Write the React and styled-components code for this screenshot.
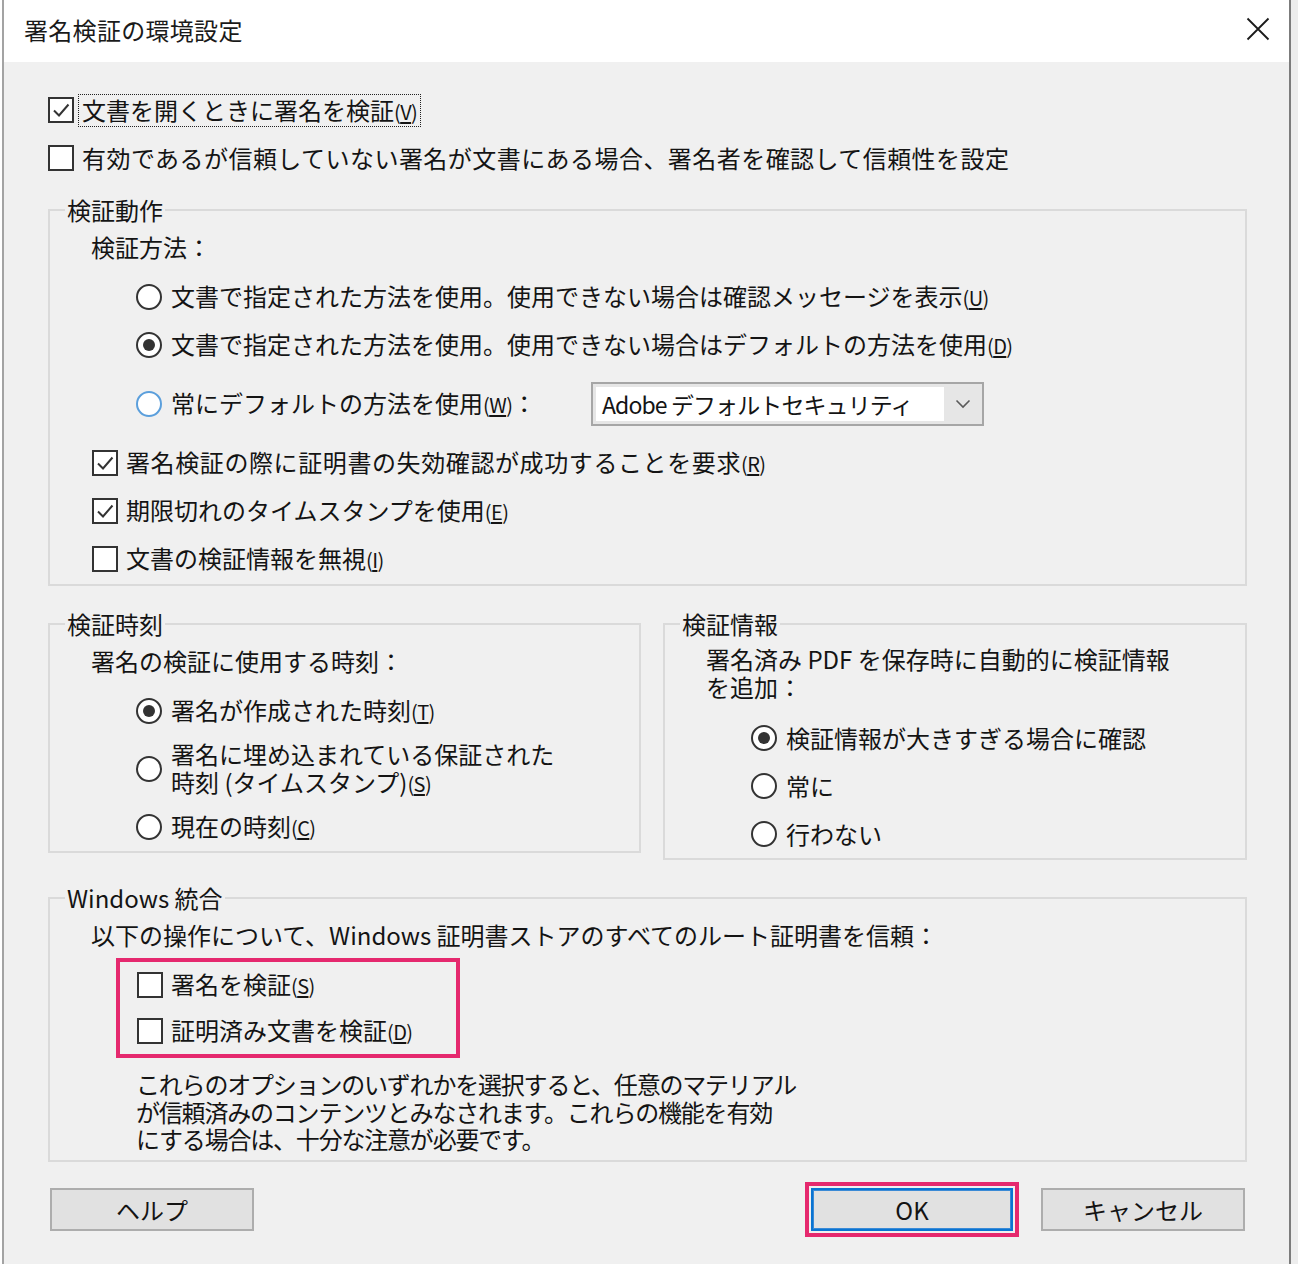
import React from 'react';
import styled, { createGlobalStyle } from 'styled-components';

const Global = createGlobalStyle`
  html, body { margin: 0; padding: 0; background: #fff; }
  body {
    font-family: "Noto Sans CJK JP", "Noto Sans", sans-serif;
    color: #141414;
    -webkit-font-smoothing: antialiased;
  }
  * { box-sizing: border-box; }
`;

const Page = styled.div`
  display: flex;
  min-height: 1264px;
  padding-left: 2px;
  background: #fff;
  overflow: hidden;
`;

const Dialog = styled.div`
  width: 1289px;
  flex: none;
  border-left: 2px solid #a3a3a3;
  border-right: 2px solid #7c7c7c;
  background: #f0f0f0;
  display: flex;
  flex-direction: column;
`;

const Backdrop = styled.div`
  flex: 1;
  background: #ededed;
`;

const TitleBar = styled.div`
  height: 62px;
  background: #fff;
  display: flex;
  align-items: center;
  justify-content: space-between;
  padding: 0 19px 4px 20px;
`;

const Title = styled.div`
  font-size: 24px;
  letter-spacing: 0.3px;
  color: #1a1a1a;
`;

const CloseButton = styled.div`
  width: 24px;
  height: 24px;
  display: flex;
  align-items: center;
  justify-content: center;
`;

const Body = styled.div`
  padding: 24px 42px 0 44px;
  font-size: 24px;
`;

const Row = styled.div`
  display: flex;
  align-items: center;
  gap: ${p => p.$gap ?? 8}px;
  height: ${p => p.$h ?? 48}px;
  padding-left: ${p => p.$indent ?? 0}px;
  white-space: nowrap;
  font-size: 24px;
  line-height: 28px;
`;

const Box = styled.span`
  width: 26px;
  height: 26px;
  flex: none;
  border: 2px solid #333;
  background: #fff;
  display: flex;
  align-items: center;
  justify-content: center;
`;

const Circle = styled.span`
  width: 26px;
  height: 26px;
  flex: none;
  border-radius: 50%;
  border: 2px solid ${p => (p.$hover ? '#5b9fdc' : '#333')};
  background: #fff;
  display: flex;
  align-items: center;
  justify-content: center;
  &::after {
    content: '';
    width: 12px;
    height: 12px;
    border-radius: 50%;
    background: #333;
    display: ${p => (p.$on ? 'block' : 'none')};
  }
`;

const Focus = styled.span`
  border: 1px dotted #222;
  padding: 0 3px;
  line-height: 29px;
`;

const Key = styled.span`
  font-size: 20px;
  letter-spacing: -0.6px;
  u { text-underline-offset: 2px; }
`;

const Text = styled.span`
  display: inline-block;
  width: ${p => (p.$w ? `${p.$w}px` : 'auto')};
  line-height: 28px;
  letter-spacing: ${p => p.$ls ?? 0}px;
`;

const Group = styled.fieldset`
  margin: ${p => p.$mt ?? 0}px 0 0;
  padding: 0 0 ${p => p.$pb ?? 0}px;
  border: 2px solid #dadada;
  min-width: 0;
`;

const Legend = styled.legend`
  margin-left: 15px;
  padding: 0 2px;
  font-size: 24px;
  line-height: 28px;
`;

const Caption = styled.div`
  margin-top: ${p => p.$mt ?? 7}px;
  padding-left: ${p => p.$indent ?? 41}px;
  font-size: 24px;
  line-height: ${p => p.$lh ?? 32}px;
`;

const List = styled.div`
  margin-top: ${p => p.$mt ?? 10}px;
  display: flex;
  flex-direction: column;
`;

const Columns = styled.div`
  margin-top: 24px;
  display: grid;
  grid-template-columns: 593px 584px;
  column-gap: 22px;
  align-items: start;
`;

const Select = styled.div`
  width: 393px;
  height: 44px;
  border: 2px solid #a6a6a6;
  background: #e6e6e6;
  display: flex;
  align-items: stretch;
  padding: 3px 0 3px 3px;
`;

const SelectValue = styled.div`
  flex: 1;
  background: #fff;
  display: flex;
  align-items: center;
  padding-left: 6px;
  font-size: 23px;
  letter-spacing: -0.9px;
`;

const SelectArrow = styled.div`
  width: 38px;
  display: flex;
  align-items: center;
  justify-content: center;
`;

const Highlight = styled.div`
  margin: 7px 0 0 66px;
  width: 344px;
  border: 4px solid #e5296e;
  padding-left: 17px;
`;

const Note = styled.p`
  margin: 12px 0 0 86px;
  padding-bottom: 7px;
  font-size: 24px;
  line-height: 27.5px;
  letter-spacing: -1.2px;
`;

const ButtonRow = styled.div`
  margin-top: 20px;
  display: flex;
  align-items: center;
  justify-content: space-between;
  padding: 0 2px;
`;

const RightButtons = styled.div`
  display: flex;
  align-items: center;
  gap: 22px;
`;

const Button = styled.div`
  width: ${p => p.$w ?? 204}px;
  height: 43px;
  background: #e1e1e1;
  border: 2px solid ${p => (p.$default ? '#0a74d2' : '#adadad')};
  box-shadow: ${p => (p.$default ? 'inset 0 0 0 1px #3a8ad6' : 'none')};
  display: flex;
  align-items: center;
  justify-content: center;
  font-size: 24px;
`;

const FocusFrame = styled.div`
  border: 4px solid #e5296e;
  padding: 2px;
`;

const Check = () => (
  <svg width="20" height="20" viewBox="0 0 20 20">
    <polyline points="3,10.5 8,15.5 17.5,4.5" fill="none" stroke="#333" strokeWidth="2" />
  </svg>
);

const Checkbox = ({ on, children, indent, gap, h }) => (
  <Row $indent={indent} $gap={gap} $h={h}>
    <Box>{on && <Check />}</Box>
    {children}
  </Row>
);

const Radio = ({ on, hover, children, indent = 86, h }) => (
  <Row $indent={indent} $gap={9} $h={h}>
    <Circle $on={on} $hover={hover} />
    {children}
  </Row>
);

const K = ({ k }) => (
  <Key>(<u>{k}</u>)</Key>
);

export default function App() {
  return (
    <>
      <Global />
      <Page>
        <Dialog>
          <TitleBar>
            <Title>署名検証の環境設定</Title>
            <CloseButton>
              <svg width="24" height="24" viewBox="0 0 24 24">
                <path d="M1.5 1.5 L22.5 22.5 M22.5 1.5 L1.5 22.5" stroke="#1a1a1a" strokeWidth="1.8" fill="none" />
              </svg>
            </CloseButton>
          </TitleBar>
          <Body>
            <Checkbox on gap={4}>
              <Focus>文書を開くときに署名を検証<K k="V" /></Focus>
            </Checkbox>
            <Checkbox>
              <Text $ls={0.45}>有効であるが信頼していない署名が文書にある場合、署名者を確認して信頼性を設定</Text>
            </Checkbox>

            <Group $mt={14} $pb={1}>
              <Legend>検証動作</Legend>
              <Caption>検証方法：</Caption>
              <List>
                <Radio>
                  <Text>文書で指定された方法を使用。使用できない場合は確認メッセージを表示<K k="U" /></Text>
                </Radio>
                <Radio on>
                  <Text>文書で指定された方法を使用。使用できない場合はデフォルトの方法を使用<K k="D" /></Text>
                </Radio>
                <Radio hover h={70}>
                  <Text $w={411}>常にデフォルトの方法を使用<K k="W" />：</Text>
                  <Select>
                    <SelectValue>Adobe デフォルトセキュリティ</SelectValue>
                    <SelectArrow>
                      <svg width="16" height="10" viewBox="0 0 16 10">
                        <polyline points="1.5,1.5 8,8 14.5,1.5" fill="none" stroke="#5a5a5a" strokeWidth="1.6" />
                      </svg>
                    </SelectArrow>
                  </Select>
                </Radio>
                <Checkbox on indent={42}>
                  <Text $ls={0.6}>署名検証の際に証明書の失効確認が成功することを要求<K k="R" /></Text>
                </Checkbox>
                <Checkbox on indent={42}>
                  <Text>期限切れのタイムスタンプを使用<K k="E" /></Text>
                </Checkbox>
                <Checkbox indent={42}>
                  <Text>文書の検証情報を無視<K k="I" /></Text>
                </Checkbox>
              </List>
            </Group>

            <Columns>
              <Group>
                <Legend>検証時刻</Legend>
                <Caption>署名の検証に使用する時刻：</Caption>
                <List>
                  <Radio on>
                    <Text>署名が作成された時刻<K k="T" /></Text>
                  </Radio>
                  <Radio h={68}>
                    <Text>署名に埋め込まれている保証された<br />時刻 (タイムスタンプ)<K k="S" /></Text>
                  </Radio>
                  <Radio>
                    <Text>現在の時刻<K k="C" /></Text>
                  </Radio>
                </List>
              </Group>
              <Group>
                <Legend>検証情報</Legend>
                <Caption $lh={28}>署名済み PDF を保存時に自動的に検証情報<br />を追加：</Caption>
                <List $mt={13}>
                  <Radio on>
                    <Text>検証情報が大きすぎる場合に確認</Text>
                  </Radio>
                  <Radio>
                    <Text>常に</Text>
                  </Radio>
                  <Radio>
                    <Text>行わない</Text>
                  </Radio>
                </List>
              </Group>
            </Columns>

            <Group $mt={24}>
              <Legend>Windows 統合</Legend>
              <Caption>以下の操作について、Windows 証明書ストアのすべてのルート証明書を信頼：</Caption>
              <Highlight>
                <Checkbox h={46}>
                  <Text>署名を検証<K k="S" /></Text>
                </Checkbox>
                <Checkbox h={46}>
                  <Text>証明済み文書を検証<K k="D" /></Text>
                </Checkbox>
              </Highlight>
              <Note>
                これらのオプションのいずれかを選択すると、任意のマテリアル<br />
                が信頼済みのコンテンツとみなされます。これらの機能を有効<br />
                にする場合は、十分な注意が必要です。
              </Note>
            </Group>

            <ButtonRow>
              <Button>ヘルプ</Button>
              <RightButtons>
                <FocusFrame>
                  <Button $w={202} $default>OK</Button>
                </FocusFrame>
                <Button>キャンセル</Button>
              </RightButtons>
            </ButtonRow>
          </Body>
        </Dialog>
        <Backdrop />
      </Page>
    </>
  );
}
